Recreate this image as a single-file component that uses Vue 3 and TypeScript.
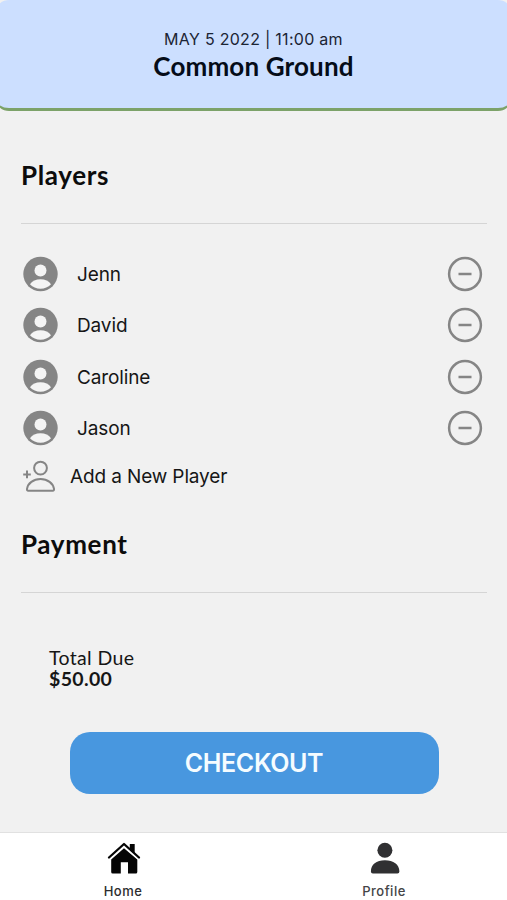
<script setup lang="ts">
import { ref } from 'vue'

interface Player {
  id: number
  name: string
}

const players = ref<Player[]>([
  { id: 1, name: 'Jenn' },
  { id: 2, name: 'David' },
  { id: 3, name: 'Caroline' },
  { id: 4, name: 'Jason' },
])

function removePlayer(id: number): void {
  players.value = players.value.filter((player) => player.id !== id)
}
</script>

<template>
  <div class="screen">
    <header class="booking">
      <p class="booking-date">MAY 5 2022 | 11:00 am</p>
      <h1 class="booking-title">Common Ground</h1>
    </header>

    <main class="content">
      <h2 class="heading">Players</h2>
      <ul class="players">
        <li v-for="player in players" :key="player.id" class="player">
          <svg class="avatar" viewBox="0 0 36 36">
            <circle cx="18.500" cy="18" r="17.2" fill="#858585" />
            <circle cx="18.500" cy="14.4" r="6" fill="#f4f4f4" />
            <path d="M8 28.2C10.200 25 14 23.200 18.500 23.200s8.300 1.800 10.500 5c-2.800 2.900-6.300 4.500-10.500 4.500s-7.700-1.600-10.500-4.500z" fill="#f4f4f4" />
          </svg>
          <span class="name">{{ player.name }}</span>
          <button class="remove" type="button" @click="removePlayer(player.id)">
            <svg viewBox="0 0 36 36" fill="none" stroke="#858585" stroke-width="2.500">
              <circle cx="18" cy="18" r="15.900" />
              <path d="M11.500 18h13" />
            </svg>
          </button>
        </li>
      </ul>
      <button class="add" type="button">
        <svg class="add-icon" viewBox="0 0 36 36" fill="none" stroke="#858585" stroke-width="2" stroke-linejoin="round">
          <circle cx="18.500" cy="10.100" r="6.400" />
          <path d="M1.200 16.400h7.600M5 12.600v7.600" />
          <path d="M6.300 32.700c-1.100 0-1.500-.7-1.300-1.900.9-5.600 6.300-9.700 13.500-9.700s12.500 4.100 13.500 9.700c.2 1.200-.2 1.900-1.300 1.900z" />
        </svg>
        <span class="add-label">Add a New Player</span>
      </button>

      <h2 class="heading payment">Payment</h2>
      <section class="total">
        <p class="total-label">Total Due</p>
        <p class="total-value">$50.00</p>
      </section>
      <button class="checkout" type="button">CHECKOUT</button>
    </main>

    <nav class="tabs">
      <a class="tab home">
        <svg class="tab-icon" viewBox="0 0 36 36">
          <path d="M6.200 19.500L19 8.200l13.300 11.300v12.500q0 1.500-1.500 1.500H23V22.200h-7.200v11.300H7.700q-1.500 0-1.500-1.500z" fill="#050505" />
          <path d="M4 18.800L19 5.600l15 13.200" fill="none" stroke="#fff" stroke-width="2.600" />
          <path d="M24.800 4h4.900v10l-4.900-4.300z" fill="#050505" />
          <path d="M4 17.500L19 4l15 13.500" fill="none" stroke="#050505" stroke-width="2.300" stroke-linecap="round" stroke-linejoin="round" />
        </svg>
        <span>Home</span>
      </a>
      <a class="tab profile">
        <svg class="tab-icon" viewBox="0 0 36 36" fill="#303032">
          <circle cx="18.900" cy="10.200" r="7.500" />
          <path d="M4.900 31.500C4.900 24.500 10.400 20.300 18.900 20.300s14.500 4.200 14.500 11.200q0 2.100-2 2.100H6.900q-2 0-2-2.100z" />
        </svg>
        <span>Profile</span>
      </a>
    </nav>
  </div>
</template>

<style>
body {
  margin: 0;
  background: #f1f1f1;
}
</style>

<style scoped>
.screen {
  display: flex;
  flex-direction: column;
  height: 900px;
  overflow: hidden;
  background: #f1f1f1;
  color: #161616;
  font-family: Inter, "Liberation Sans", sans-serif;
}

p,
h1,
h2,
ul {
  margin: 0;
  padding: 0;
}

button {
  padding: 0;
  border: 0;
  background: none;
  color: inherit;
  font: inherit;
}

svg {
  display: block;
}

.booking {
  box-sizing: border-box;
  flex: none;
  height: 111px;
  margin: 0 -5px;
  padding-top: 29px;
  border-bottom: 3px solid #7ca269;
  border-radius: 14px;
  background: #ccdfff;
  text-align: center;
}

.booking-date {
  font-size: 16px;
  line-height: 20px;
  letter-spacing: 0.28px;
  color: #1b2434;
}

.booking-title {
  font: 700 26px/34px Lato, sans-serif;
  letter-spacing: 0.15px;
  color: #050c18;
}

.content {
  display: flex;
  flex: 1;
  flex-direction: column;
  padding: 0 20px 0 21px;
}

.heading {
  box-sizing: border-box;
  height: 73px;
  margin-top: 40px;
  padding-top: 8px;
  border-bottom: 1px solid #d5d5d5;
  font: 700 26px/32px Lato, sans-serif;
  letter-spacing: 0.65px;
  color: #0c0c0c;
}

.players {
  margin-top: 24px;
  list-style: none;
}

.player {
  display: flex;
  align-items: center;
  height: 51.5px;
  padding: 0 4px 0 1px;
}

.avatar,
.remove,
.remove svg {
  flex: none;
  width: 36px;
  height: 36px;
}

.name {
  flex: 1;
  padding: 1px 0 0 19px;
  font-size: 19px;
  letter-spacing: -0.12px;
}

.add {
  display: flex;
  align-items: center;
  height: 36px;
  margin-top: 4px;
  padding-left: 1px;
}

.add-icon {
  width: 36px;
  height: 36px;
}

.add-label {
  padding-left: 12px;
  font-size: 19px;
  letter-spacing: -0.13px;
}

.heading.payment {
  margin-top: 26px;
}

.total {
  padding: 54px 0 0 28px;
  font-family: Lato, sans-serif;
  font-size: 19.5px;
  line-height: 21px;
  letter-spacing: 0.35px;
}

.total-value {
  font-weight: 700;
}

.checkout {
  align-self: center;
  width: 369px;
  height: 62px;
  margin-top: 43px;
  border-radius: 20px;
  background: #4897df;
  color: #f5fcff;
  font-size: 25px;
  font-weight: 600;
  letter-spacing: -0.35px;
}

.tabs {
  display: flex;
  box-sizing: border-box;
  flex: none;
  justify-content: space-between;
  height: 68px;
  padding: 7px 73px 0;
  border-top: 1px solid #e1e1e1;
  background: #fff;
}

.tab {
  display: flex;
  flex-direction: column;
  align-items: center;
  width: 100px;
  gap: 6px;
  color: #444446;
  font-size: 13px;
  font-weight: 500;
  line-height: 19px;
  letter-spacing: 0.5px;
}

.tab-icon {
  flex: none;
  width: 36px;
  height: 36px;
}

.home {
  color: #2c2c2e;
}
</style>
